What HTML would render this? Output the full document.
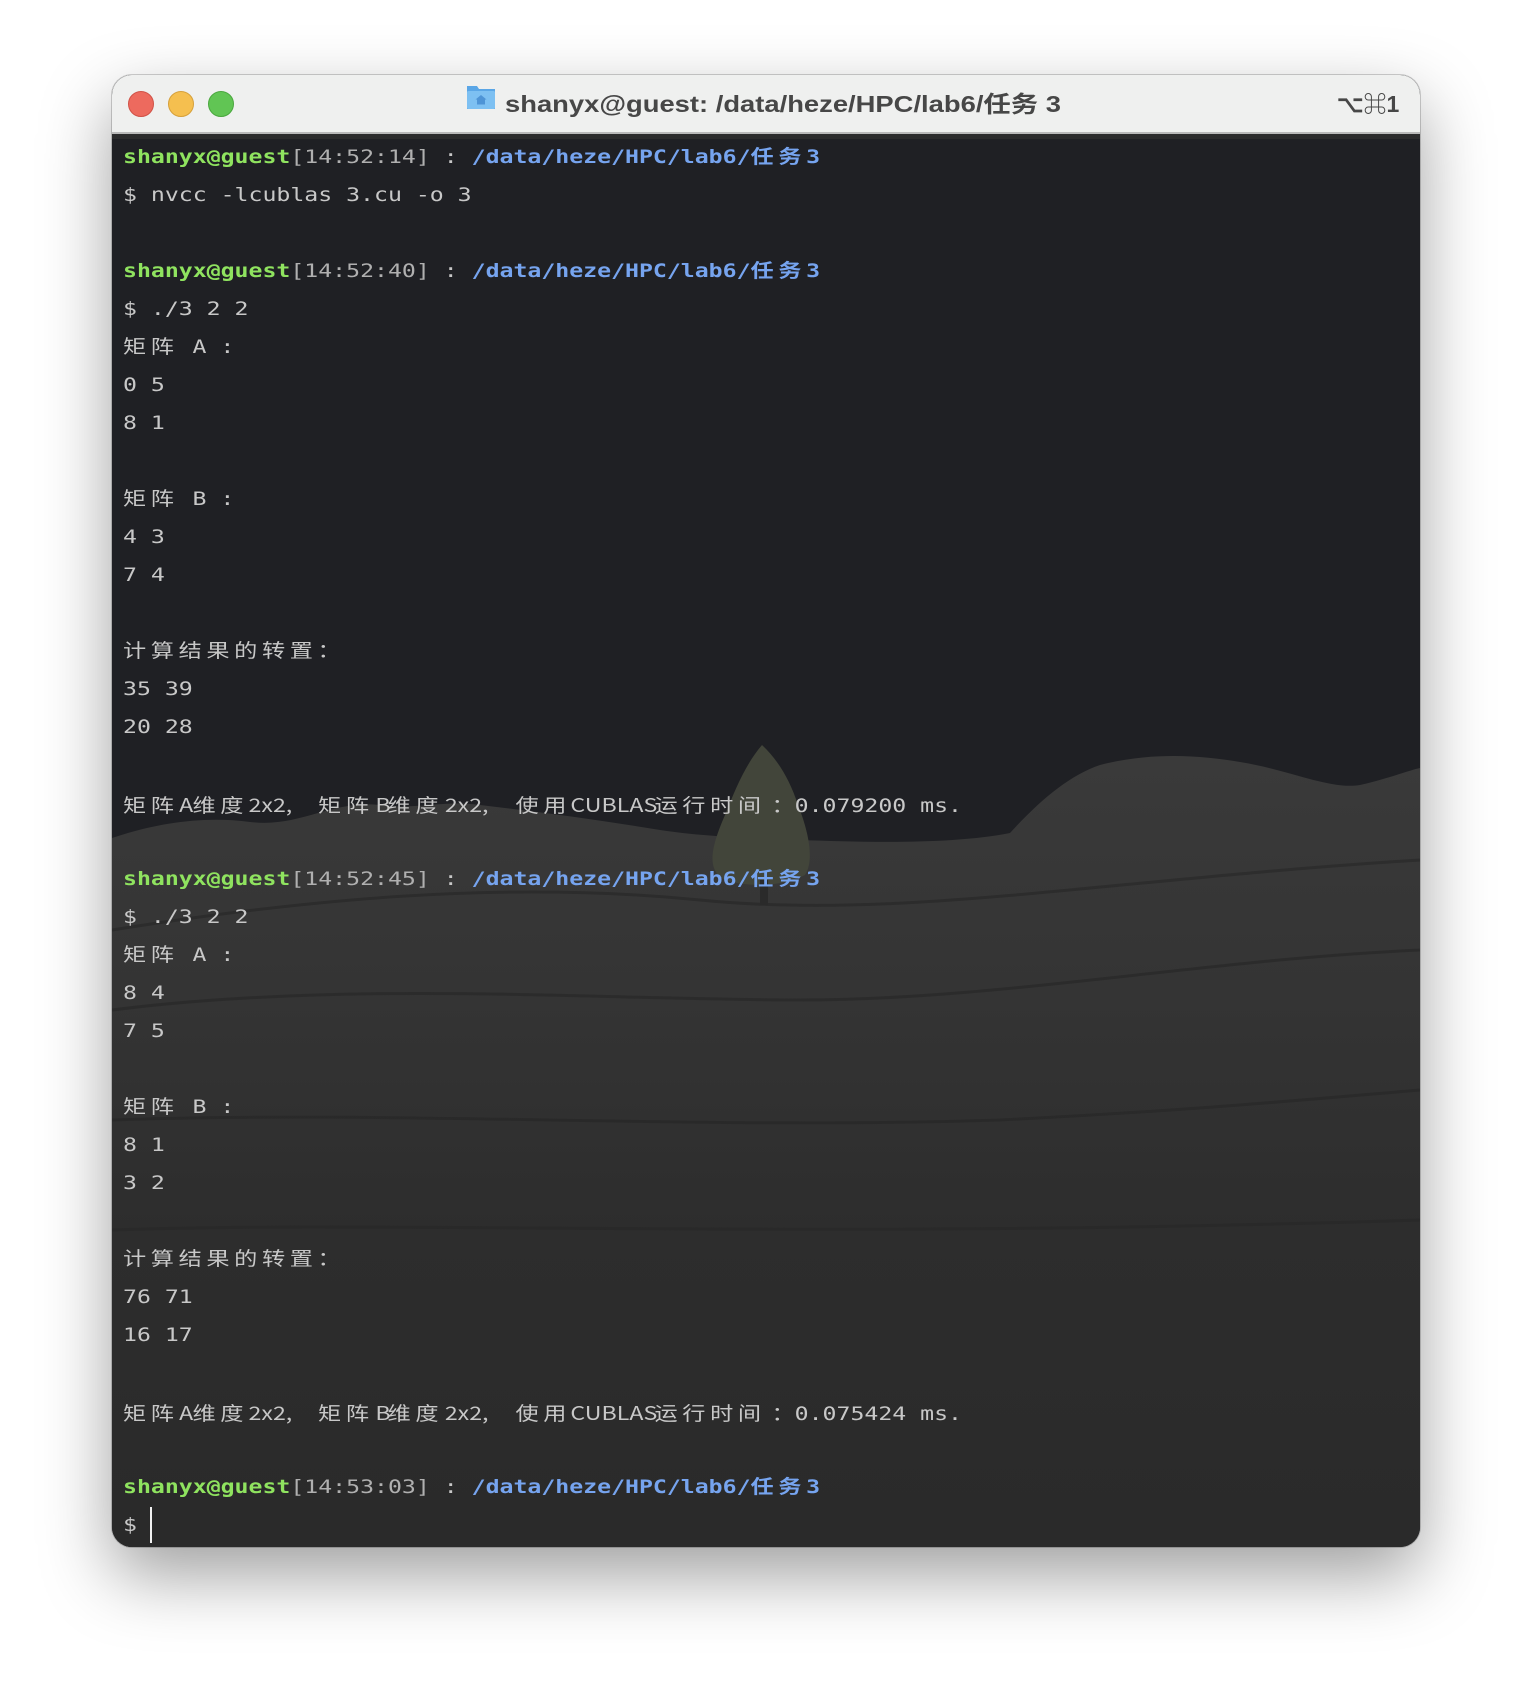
<!DOCTYPE html>
<html><head><meta charset="utf-8">
<style>
html,body{margin:0;padding:0;width:1532px;height:1696px;background:#fff;overflow:hidden;position:relative;}
.win{position:absolute;left:112px;top:75px;width:1308px;height:1472px;border-radius:20px;overflow:hidden;background:#1f2024;box-shadow:0 28px 70px rgba(0,0,0,0.38),0 0 0 1px rgba(0,0,0,0.18);}
.tb{position:absolute;left:0;top:0;width:100%;height:57px;background:#eff0ef;border-bottom:2px solid #b9b9b9;}
.strip{position:absolute;left:0;top:59px;width:100%;height:5px;background:#2b2b2c;}
.dot{position:absolute;top:16px;width:24px;height:24px;border-radius:50%;}
.ttl{position:absolute;top:10px;font:bold 23px "Liberation Sans","Noto Sans CJK SC",sans-serif;color:#474747;transform-origin:left center;white-space:nowrap;}
.bg{position:absolute;left:0;top:0;}
.l{position:absolute;left:123px;height:38px;line-height:38px;font:19px "DejaVu Sans Mono","Liberation Mono","Noto Sans CJK SC",monospace;color:#c8c8c8;transform:scaleX(1.219);transform-origin:left center;white-space:pre;}
.c{font-family:"Noto Sans CJK SC",sans-serif;letter-spacing:3.8px;line-height:0;font-weight:normal;}
.b .c{font-weight:bold;}
.g{color:#8fe35f;font-weight:bold;}
.b{color:#76a4ef;font-weight:bold;}
.k{color:#b0b0b0;}
.s{position:absolute;top:0;line-height:38px;}
.sn{font-family:"Noto Sans CJK SC",sans-serif;line-height:0;}
</style></head><body>
<div class="win">
<svg class="bg" width="1308" height="1472" viewBox="112 75 1308 1472">
<defs>
<linearGradient id="rk" x1="0" y1="0" x2="0" y2="1">
<stop offset="0" stop-color="#3a3a3a"/><stop offset="0.3" stop-color="#343434"/><stop offset="0.6" stop-color="#2d2d2d"/><stop offset="1" stop-color="#2a2a2a"/>
</linearGradient>
</defs>
<rect x="112" y="75" width="1308" height="1472" fill="#1f2024"/>
<path d="M112 838 C150 825 200 815 250 822 C300 828 330 800 380 805 C420 810 440 800 480 805 C540 812 600 820 660 830 C700 836 740 838 800 840 C860 842 950 845 1010 833 C1040 800 1070 775 1100 765 C1150 752 1200 755 1240 762 C1290 770 1330 790 1360 785 C1390 778 1410 770 1420 768 L1420 1547 L112 1547 Z" fill="url(#rk)"/>
<g stroke="#262626" stroke-width="3" fill="none" opacity="0.6">
<path d="M112 930 C300 900 500 880 700 900 C900 920 1100 880 1420 860"/>
<path d="M112 1010 C350 980 600 1000 800 1000 C1000 1000 1200 960 1420 950"/>
<path d="M112 1120 C400 1110 700 1130 1000 1120 C1200 1110 1300 1100 1420 1090"/>
<path d="M112 1230 C400 1220 800 1240 1420 1220"/>
</g>
<path d="M762 745 C745 765 735 790 725 815 C712 845 705 870 725 880 C750 888 785 886 805 875 C815 860 808 830 798 805 C790 780 778 760 762 745 Z" fill="#42453a"/>
<rect x="760" y="880" width="8" height="25" fill="#2a2a2a"/>
</svg>
<div class="tb"></div>
<div class="strip"></div>
<div class="dot" style="left:16px;background:#ed6a5e;border:0.5px solid #d05247"></div>
<div class="dot" style="left:56px;background:#f5bf4f;border:0.5px solid #d6a03a"></div>
<div class="dot" style="left:96px;background:#61c554;border:0.5px solid #4aa73e"></div>
<svg style="position:absolute;left:354px;top:9px" width="30" height="27" viewBox="0 0 30 27">
<path d="M1 2 h10 l2 3 h16 v20 h-28 z" fill="#5aa6e6"/><rect x="1" y="7" width="28" height="18" rx="1.5" fill="#7dc0f2"/>
<path d="M15 11 l-5.5 4.5 h1.5 v5 h8 v-5 h1.5 z" fill="#4e94d6"/>
</svg>
<div class="ttl" style="left:393px;transform:scaleX(1.19)">shanyx@guest: /data/heze/HPC/lab6/任务 3</div>
<div class="ttl" style="left:1225px;transform:scaleX(1.0)">⌥⌘1</div>
</div>

<div class="l" style="top:146px"><span class="g">shanyx@guest</span><span class="k">[14:52:14]</span> : <span class="b">/data/heze/HPC/lab6/<span class="c">任务</span>3</span></div>
<div class="l" style="top:184px">$ nvcc -lcublas 3.cu -o 3</div>
<div class="l" style="top:260px"><span class="g">shanyx@guest</span><span class="k">[14:52:40]</span> : <span class="b">/data/heze/HPC/lab6/<span class="c">任务</span>3</span></div>
<div class="l" style="top:298px">$ ./3 2 2</div>
<div class="l" style="top:336px"><span class="c">矩阵</span> A :</div>
<div class="l" style="top:374px">0 5</div>
<div class="l" style="top:412px">8 1</div>
<div class="l" style="top:488px"><span class="c">矩阵</span> B :</div>
<div class="l" style="top:526px">4 3</div>
<div class="l" style="top:564px">7 4</div>
<div class="l" style="top:640px"><span class="c">计算结果的转置：</span></div>
<div class="l" style="top:678px">35 39</div>
<div class="l" style="top:716px">20 28</div>
<div class="l" style="top:787px"><span class="s" style="left:0"><span class="c">矩阵</span></span><span class="s" style="left:46px"><span class="sn">A</span></span><span class="s" style="left:57px"><span class="c">维度</span></span><span class="s" style="left:103px"><span class="sn">2x2,</span></span><span class="s" style="left:160px"><span class="c">矩阵</span></span><span class="s" style="left:207px"><span class="sn">B</span></span><span class="s" style="left:217px"><span class="c">维度</span></span><span class="s" style="left:264px"><span class="sn">2x2,</span></span><span class="s" style="left:322px"><span class="c">使用</span></span><span class="s" style="left:367px"><span class="sn">CUBLAS</span></span><span class="s" style="left:436px"><span class="c">运行时间</span></span><span class="s" style="left:532px"><span class="c">：</span></span><span class="s" style="left:551px">0.079200 ms.</span></div>
<div class="l" style="top:868px"><span class="g">shanyx@guest</span><span class="k">[14:52:45]</span> : <span class="b">/data/heze/HPC/lab6/<span class="c">任务</span>3</span></div>
<div class="l" style="top:906px">$ ./3 2 2</div>
<div class="l" style="top:944px"><span class="c">矩阵</span> A :</div>
<div class="l" style="top:982px">8 4</div>
<div class="l" style="top:1020px">7 5</div>
<div class="l" style="top:1096px"><span class="c">矩阵</span> B :</div>
<div class="l" style="top:1134px">8 1</div>
<div class="l" style="top:1172px">3 2</div>
<div class="l" style="top:1248px"><span class="c">计算结果的转置：</span></div>
<div class="l" style="top:1286px">76 71</div>
<div class="l" style="top:1324px">16 17</div>
<div class="l" style="top:1395px"><span class="s" style="left:0"><span class="c">矩阵</span></span><span class="s" style="left:46px"><span class="sn">A</span></span><span class="s" style="left:57px"><span class="c">维度</span></span><span class="s" style="left:103px"><span class="sn">2x2,</span></span><span class="s" style="left:160px"><span class="c">矩阵</span></span><span class="s" style="left:207px"><span class="sn">B</span></span><span class="s" style="left:217px"><span class="c">维度</span></span><span class="s" style="left:264px"><span class="sn">2x2,</span></span><span class="s" style="left:322px"><span class="c">使用</span></span><span class="s" style="left:367px"><span class="sn">CUBLAS</span></span><span class="s" style="left:436px"><span class="c">运行时间</span></span><span class="s" style="left:532px"><span class="c">：</span></span><span class="s" style="left:551px">0.075424 ms.</span></div>
<div class="l" style="top:1476px"><span class="g">shanyx@guest</span><span class="k">[14:53:03]</span> : <span class="b">/data/heze/HPC/lab6/<span class="c">任务</span>3</span></div>
<div class="l" style="top:1514px">$ </div>
<div style="position:absolute;left:150px;top:1507px;width:2px;height:36px;background:#f2f2f2"></div>
</body></html>
